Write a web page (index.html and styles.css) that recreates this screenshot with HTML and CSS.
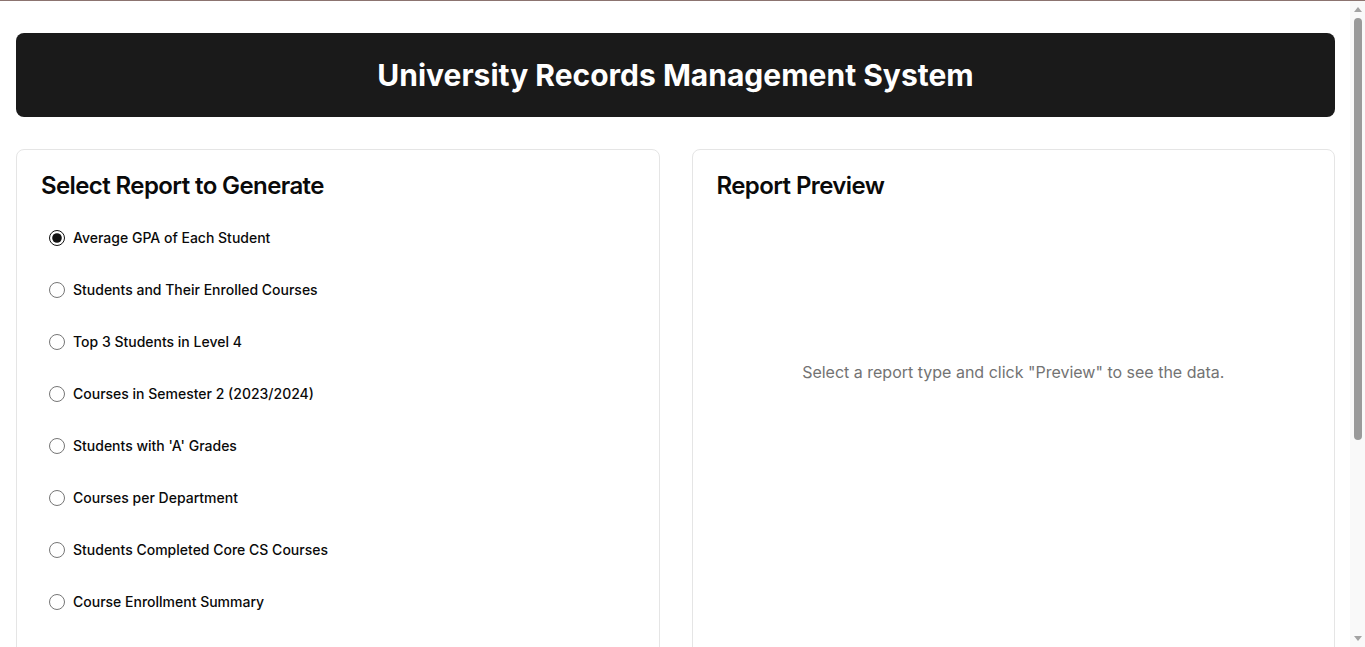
FILE: index.html
```html
<!DOCTYPE html>
<html lang="en">
<head>
    <meta charset="UTF-8">
    <meta name="viewport" content="width=device-width, initial-scale=1.0">
    <title>University Records Management System</title>
    <link rel="stylesheet" href="styles.css">
</head>
<body>
    <header class="app-header">
        <h1>University Records Management System</h1>
    </header>

    <main class="layout">
        <section class="card">
            <h2>Select Report to Generate</h2>
            <form class="report-list">
                <label class="report-option"><input type="radio" name="report" value="gpa" checked> Average GPA of Each Student</label>
                <label class="report-option"><input type="radio" name="report" value="enrolled"> Students and Their Enrolled Courses</label>
                <label class="report-option"><input type="radio" name="report" value="top3"> Top 3 Students in Level 4</label>
                <label class="report-option"><input type="radio" name="report" value="sem2"> Courses in Semester 2 (2023/2024)</label>
                <label class="report-option"><input type="radio" name="report" value="agrades"> Students with 'A' Grades</label>
                <label class="report-option"><input type="radio" name="report" value="dept"> Courses per Department</label>
                <label class="report-option"><input type="radio" name="report" value="core"> Students Completed Core CS Courses</label>
                <label class="report-option"><input type="radio" name="report" value="summary"> Course Enrollment Summary</label>
            </form>
            <div class="actions">
                <button type="button" class="btn btn-outline">Preview</button>
                <button type="button" class="btn btn-dark">Generate PDF</button>
            </div>
        </section>

        <section class="card">
            <h2>Report Preview</h2>
            <div class="preview">
                <p>Select a report type and click "Preview" to see the data.</p>
            </div>
        </section>
    </main>

    <!-- window scrollbar -->
    <div class="scrollbar">
        <span class="arrow arrow-up"></span>
        <span class="thumb"></span>
        <span class="arrow arrow-down"></span>
    </div>
</body>
</html>
```

FILE: styles.css
```css
* {
    box-sizing: border-box;
}

body {
    font-family: Inter, "Noto Sans", sans-serif;
    margin: 0;
    padding: 32px 30px 32px 16px;
    background-color: #fff;
    color: #0a0a0a;
    border-top: 1px solid #8c7470;
}

.app-header {
    background-color: #1a1a1a;
    color: #fff;
    border-radius: 8px;
    padding: 24px;
    text-align: center;
    margin-bottom: 32px;
}

.app-header h1 {
    margin: 0;
    font-size: 30px;
    line-height: 36px;
    font-weight: 700;
}

.layout {
    display: grid;
    grid-template-columns: 1fr 1fr;
    gap: 32px;
}

.card {
    border: 1px solid #e5e5e5;
    border-radius: 8px;
    padding: 24px;
    background-color: #fff;
}

.card h2 {
    margin: 0 0 18px;
    font-size: 24px;
    line-height: 1;
    font-weight: 600;
    letter-spacing: -0.025em;
}

.report-list {
    display: flex;
    flex-direction: column;
    gap: 8px;
}

.report-option {
    display: flex;
    align-items: center;
    gap: 8px;
    padding: 12px 8px;
    font-size: 14px;
    line-height: 20px;
    font-weight: 500;
    cursor: pointer;
    border-radius: 6px;
}

.report-option input {
    width: 16px;
    height: 16px;
    margin: 0;
    accent-color: #111;
}

.actions {
    display: flex;
    gap: 12px;
    margin-top: 40px;
}

.btn {
    flex: 1;
    padding: 10px 16px;
    font-family: inherit;
    font-size: 14px;
    font-weight: 500;
    border-radius: 6px;
    cursor: pointer;
}

.btn-outline {
    background-color: #fff;
    border: 1px solid #e5e5e5;
    color: #0a0a0a;
}

.btn-dark {
    background-color: #1a1a1a;
    border: 1px solid #1a1a1a;
    color: #fff;
}

.preview {
    display: flex;
    align-items: center;
    justify-content: center;
    min-height: 312px;
}

.preview p {
    margin: 0;
    color: #737373;
    font-size: 16px;
}

.scrollbar {
    position: fixed;
    top: 1px;
    right: 0;
    bottom: 0;
    width: 15px;
    background-color: #f9f9f9;
    display: flex;
    flex-direction: column;
    align-items: center;
}

.arrow {
    width: 0;
    height: 0;
    border-left: 4px solid transparent;
    border-right: 4px solid transparent;
    margin: 6px 0;
}

.arrow-up {
    border-bottom: 5px solid #a3a3a3;
}

.arrow-down {
    border-top: 5px solid #a3a3a3;
    margin-top: auto;
}

.thumb {
    width: 8px;
    height: 422px;
    background-color: #9a9a9a;
    border-radius: 4px;
}
```
